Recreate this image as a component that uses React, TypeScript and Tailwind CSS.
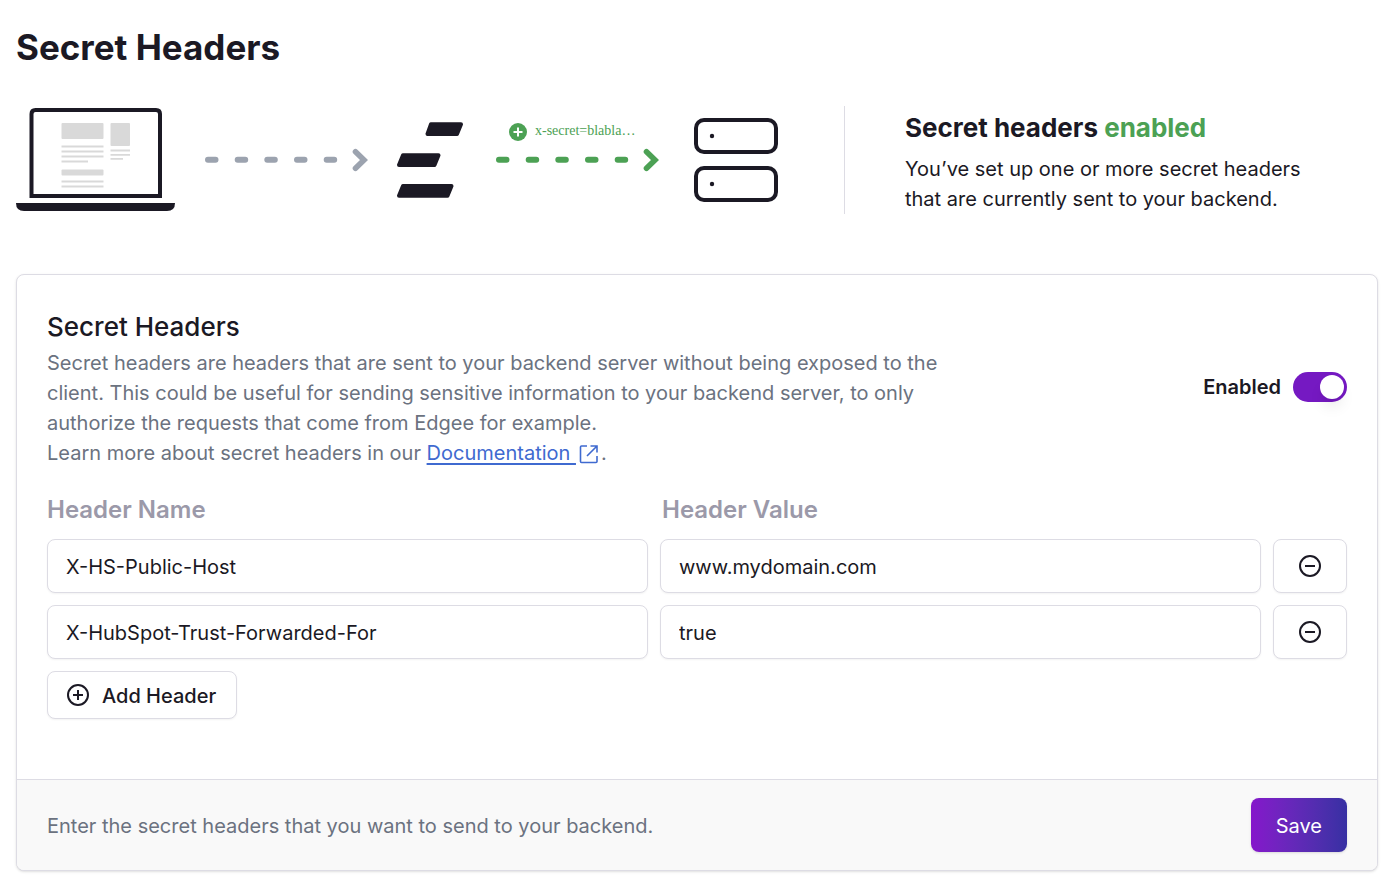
import { useState } from "react";

type HeaderRow = { id: number; name: string; value: string };

function Laptop() {
  return (
    <svg width="159" height="104" viewBox="0 0 159 104" className="shrink-0" aria-hidden="true">
      <path d="M15.500 88V6Q15.500 2 19.500 2H140Q144 2 144 6V88Z" fill="#fff" stroke="#1b1924" strokeWidth="4" />
      <path d="M0 95H159Q159 103 151 103H8Q0 103 0 95Z" fill="#1b1924" />
      <g fill="#d9d9d9">
        <rect x="45.500" y="15" width="42" height="16" rx="1" />
        <rect x="94.500" y="15" width="19.500" height="23" rx="1" />
        <rect x="45.500" y="61.500" width="42" height="6" rx="1" />
      </g>
      <g stroke="#d9d9d9" strokeWidth="1.800">
        <path d="M45.500 38.500h42M45.500 43.500h42M45.500 48.500h42M45.500 53.500h26.500M45.500 73.500h42M45.500 78.500h42" />
        <path d="M94.500 42.500H114M94.500 46.800H114M94.500 50.800h12.500" />
      </g>
    </svg>
  );
}

function DashedArrow() {
  return (
    <svg width="163" height="24" viewBox="0 0 163 24" fill="none" stroke="currentColor" strokeLinecap="round" className="shrink-0" aria-hidden="true">
      <path d="M3 11.700h7.500M32.700 11.700h7.500M62.300 11.700h7.500M92 11.700h7.500M121.700 11.700h7.500" strokeWidth="6" />
      <path d="M150.500 3.700L159 12L150.500 20.300" strokeWidth="5.600" />
    </svg>
  );
}

function BarsLogo() {
  return (
    <svg width="66" height="76" viewBox="0 0 66 76" fill="#1b1924" stroke="#1b1924" strokeWidth="4" strokeLinejoin="round" className="shrink-0" aria-hidden="true">
      <path d="M34 2.300H64L60 12H30.500Z" />
      <path d="M6 33.200H41.500L37.500 43H2Z" />
      <path d="M6 64H54.500L50.500 73.700H2Z" />
    </svg>
  );
}

function Servers() {
  return (
    <svg width="84" height="84" viewBox="0 0 84 84" className="shrink-0" aria-hidden="true">
      <g fill="none" stroke="#1b1924" strokeWidth="4">
        <rect x="2" y="2" width="80" height="32" rx="8" />
        <rect x="2" y="50" width="80" height="32" rx="8" />
      </g>
      <circle cx="18" cy="18" r="2.200" fill="#1b1924" />
      <circle cx="18" cy="66" r="2.200" fill="#1b1924" />
    </svg>
  );
}

function CircleIcon({ plus = false }: { plus?: boolean }) {
  return (
    <svg width="24" height="24" viewBox="0 0 24 24" fill="none" stroke="currentColor" strokeWidth="2" aria-hidden="true">
      <circle cx="12" cy="12" r="10" />
      <path d={plus ? "M7 12h10M12 7v10" : "M7 12h10"} />
    </svg>
  );
}

function ExternalIcon() {
  return (
    <svg width="20" height="20" viewBox="0 0 20 20" fill="none" stroke="currentColor" strokeWidth="1.600" className="mr-0.5 ml-[3px] inline-block align-[-4px]" aria-hidden="true">
      <path d="M8 2H2.500Q1.500 2 1.500 3V17.500Q1.500 18.500 2.500 18.500H17Q18 18.500 18 17.500V12" />
      <path d="M11.500 2H18V8.500M18 2L8 12" />
    </svg>
  );
}

const field =
  "h-[54px] w-full min-w-0 rounded-lg border border-[#dddce4] bg-white px-[18px] pt-0.5 text-xl text-[#1b1924] shadow-xs outline-none focus:border-[#7519c2]";

export default function App() {
  const [enabled, setEnabled] = useState(true);
  const [rows, setRows] = useState<HeaderRow[]>([
    { id: 1, name: "X-HS-Public-Host", value: "www.mydomain.com" },
    { id: 2, name: "X-HubSpot-Trust-Forwarded-For", value: "true" },
  ]);

  const update = (id: number, patch: Partial<HeaderRow>) =>
    setRows(rows.map((r) => (r.id === id ? { ...r, ...patch } : r)));

  return (
    <main className="bg-white px-4 pt-6 pb-4 font-['Inter',sans-serif] text-[#1b1924]">
      <h1 className="text-[35px] leading-[46px] font-bold">Secret Headers</h1>

      <section className="mt-9 flex items-center">
        <Laptop />
        <div className="ml-[30px] text-[#9ca3af]">
          <DashedArrow />
        </div>
        <div className="ml-[29px]">
          <BarsLogo />
        </div>
        <div className="ml-[33px] flex flex-col gap-1 pb-7 text-[#4ca154]">
          <div className="flex h-6 items-center gap-2 pl-[13px]">
            <svg width="18" height="18" viewBox="0 0 18 18" className="shrink-0" aria-hidden="true">
              <circle cx="9" cy="9" r="9" fill="currentColor" />
              <path d="M9 4.500v9M4.500 9h9" stroke="#fff" strokeWidth="2" />
            </svg>
            <span className="pb-0.5 font-['Liberation_Serif',serif] text-sm whitespace-nowrap">x-secret=blabla…</span>
          </div>
          <DashedArrow />
        </div>
        <div className="ml-[35px]">
          <Servers />
        </div>
        <div className="ml-[66px] border-l border-[#dddce4] pl-[60px]">
          <h2 className="pt-1 text-[26px] leading-9 font-bold">
            Secret headers <span className="text-[#4ca154]">{enabled ? "enabled" : "disabled"}</span>
          </h2>
          <p className="mt-2 max-w-[420px] text-xl leading-[30px]">
            You’ve set up one or more secret headers that are currently sent to your backend.
          </p>
        </div>
      </section>

      <form
        className="mt-[60px] overflow-hidden rounded-lg border border-[#dddce4] bg-white shadow-sm"
        onSubmit={(e) => e.preventDefault()}
      >
        <div className="px-[30px] pt-[31px] pb-[60px]">
          <div className="flex items-center justify-between gap-8">
            <div className="max-w-[920px]">
              <h2 className="text-[26px] leading-[42px] font-medium">Secret Headers</h2>
              <p className="text-xl leading-[30px] text-[#6b7280]">
                Secret headers are headers that are sent to your backend server without being exposed to the client. This
                could be useful for sending sensitive information to your backend server, to only authorize the requests
                that come from Edgee for example.
                <br />
                Learn more about secret headers in our{" "}
                <a href="#documentation" className="text-[#3f6ad0]">
                  <span className="whitespace-pre underline decoration-2 underline-offset-3">Documentation </span>
                  <ExternalIcon />
                </a>
                .
              </p>
            </div>
            <label className="flex shrink-0 cursor-pointer items-center gap-3 text-xl font-semibold">
              Enabled
              <input
                type="checkbox"
                role="switch"
                checked={enabled}
                onChange={(e) => setEnabled(e.target.checked)}
                className="flex h-[30px] w-[54px] cursor-pointer appearance-none items-center rounded-full bg-[#d1d5db] px-[3px] before:size-6 before:rounded-full before:bg-white before:shadow-lg checked:justify-end checked:bg-[#7519c2]"
              />
            </label>
          </div>

          <div className="mt-6 grid grid-cols-[1fr_1fr_74px] gap-3">
            <div id="name-label" className="text-2xl leading-[35px] font-semibold text-[#9b99a9]">
              Header Name
            </div>
            <div id="value-label" className="col-span-2 pl-0.5 text-2xl leading-[35px] font-semibold text-[#9b99a9]">
              Header Value
            </div>
            {rows.map((row) => (
              <div key={row.id} className="contents">
                <input
                  aria-labelledby="name-label"
                  className={field}
                  value={row.name}
                  onChange={(e) => update(row.id, { name: e.target.value })}
                />
                <input
                  aria-labelledby="value-label"
                  className={field}
                  value={row.value}
                  onChange={(e) => update(row.id, { value: e.target.value })}
                />
                <button
                  type="button"
                  aria-label="Remove header"
                  onClick={() => setRows(rows.filter((r) => r.id !== row.id))}
                  className="flex h-[54px] items-center justify-center rounded-lg border border-[#dddce4] bg-white shadow-xs"
                >
                  <CircleIcon />
                </button>
              </div>
            ))}
          </div>

          <button
            type="button"
            onClick={() => setRows([...rows, { id: Date.now(), name: "", value: "" }])}
            className="mt-3 flex h-12 items-center gap-3 rounded-lg border border-[#dddce4] bg-white pr-5 pl-[18px] text-xl font-medium shadow-xs"
          >
            <CircleIcon plus />
            <span className="pt-0.5">Add Header</span>
          </button>
        </div>

        <footer className="flex items-center justify-between border-t border-[#dddce4] bg-[#f9f9f9] px-[30px] py-[18px]">
          <p className="pt-0.5 text-xl text-[#6b7280]">Enter the secret headers that you want to send to your backend.</p>
          <button
            type="submit"
            className="h-[54px] rounded-lg bg-linear-to-r from-[#8516cb] to-[#3730a3] px-[25px] pt-0.5 text-xl text-white shadow-sm"
          >
            Save
          </button>
        </footer>
      </form>
    </main>
  );
}
